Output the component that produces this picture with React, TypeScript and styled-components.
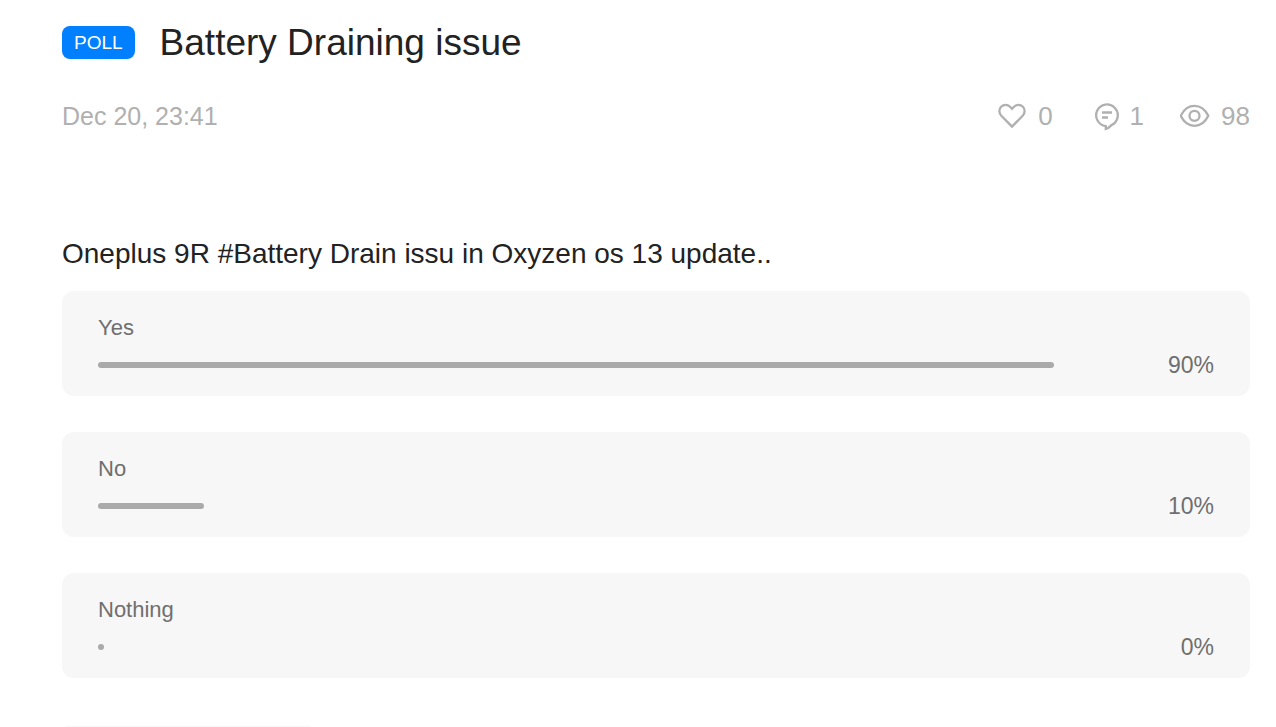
import React from "react";
import styled, { createGlobalStyle } from "styled-components";

const GlobalStyle = createGlobalStyle`
  * { box-sizing: border-box; }
  html, body { margin: 0; background: #fff; }
  body {
    font-family: "Liberation Sans", Arial, sans-serif;
    color: #222;
    overflow: hidden;
  }
`;

const Page = styled.main`
  display: flex;
  flex-direction: column;
  height: 100vh;
  padding: 20px 26px 0 62px;
  overflow: hidden;
`;

const Header = styled.header`
  display: flex;
  align-items: center;
  gap: 25px;
  height: 45px;
  flex: none;
`;

const Badge = styled.span`
  padding: 0 12px;
  border-radius: 8px;
  background: #007fff;
  color: #fff;
  font-size: 19px;
  line-height: 33px;
`;

const Title = styled.h1`
  margin: 0;
  font-size: 37px;
  line-height: 44px;
  font-weight: 400;
`;

const Meta = styled.div`
  display: flex;
  align-items: center;
  justify-content: space-between;
  flex: none;
  margin-top: 35px;
  color: #b0b0b0;
  font-size: 25px;
  line-height: 32px;
`;

const Stats = styled.div`
  display: flex;
  gap: 36px;
  font-size: 26px;
`;

const Stat = styled.span`
  display: flex;
  align-items: center;
  gap: 11px;

  svg {
    width: 30px;
    height: 30px;
    fill: none;
    stroke: currentColor;
    stroke-width: 2.3;
  }
`;

const Question = styled.h2`
  flex: none;
  margin: 104px 0 0;
  font-size: 28px;
  line-height: 36px;
  font-weight: 400;
`;

const Options = styled.ul`
  display: flex;
  flex-direction: column;
  flex: none;
  gap: 36px;
  margin: 19px 0 0;
  padding: 0;
  list-style: none;
`;

const Option = styled.li`
  padding: 22px 36px 16px;
  border-radius: 12px;
  background: #f7f7f7;
  color: #6f6f6f;
`;

const OptionName = styled.div`
  font-size: 22px;
  line-height: 29px;
`;

const ResultRow = styled.div`
  display: flex;
  align-items: center;
  margin-top: 8px;
`;

const Track = styled.div`
  flex: 1;
`;

const Fill = styled.div`
  min-width: 6px;
  height: 6px;
  border-radius: 3px;
  background: #aaa;
`;

const Percent = styled.span`
  width: 54px;
  text-align: right;
  font-size: 23px;
  line-height: 30px;
`;

const VoteButton = styled.button`
  flex: none;
  width: 253px;
  height: 60px;
  margin-top: 48px;
  border: 0;
  border-radius: 6px;
  background: #f7f7f7;
`;

const HeartIcon = () => (
  <svg viewBox="-1 0 30 30" aria-hidden="true">
    <path d="M14 25.600 3.300 14.700C.7 12 .8 8.100 3.100 5.700c2.500-2.500 6.500-2.500 8.900 0L14 7.800l2-2.100c2.400-2.500 6.400-2.500 8.900 0 2.300 2.400 2.400 6.300-.2 9Z" />
  </svg>
);

const CommentIcon = () => (
  <svg viewBox="0 0 30 30" aria-hidden="true">
    <path d="M16.800 25.030V28C18.900 27.300 20.900 25.800 22.500 24.100A10.800 10.800 0 1 0 16.800 25.030Z" />
    <path d="M13 11.500h10M13 16.500h6" />
  </svg>
);

const EyeIcon = () => (
  <svg viewBox="0 0 30 30" aria-hidden="true">
    <path d="M.7 14.800C3.600 8.800 8.800 4.800 14.500 4.800S25.400 8.800 28.300 14.800C25.400 20.800 20.200 24.800 14.500 24.800S3.600 20.800.7 14.800Z" />
    <circle cx="14.500" cy="14.800" r="5" />
  </svg>
);

const options = [
  { name: "Yes", percent: 90 },
  { name: "No", percent: 10 },
  { name: "Nothing", percent: 0 },
];

export default function App() {
  return (
    <>
      <GlobalStyle />
      <Page>
        <Header>
          <Badge>POLL</Badge>
          <Title>Battery Draining issue</Title>
        </Header>
        <Meta>
          <time>Dec 20, 23:41</time>
          <Stats>
            <Stat><HeartIcon />0</Stat>
            <Stat><CommentIcon />1</Stat>
            <Stat><EyeIcon />98</Stat>
          </Stats>
        </Meta>
        <Question>Oneplus 9R #Battery Drain issu in Oxyzen os 13 update..</Question>
        <Options>
          {options.map(({ name, percent }) => (
            <Option key={name}>
              <OptionName>{name}</OptionName>
              <ResultRow>
                <Track><Fill style={{ width: `${percent}%` }} /></Track>
                <Percent>{percent}%</Percent>
              </ResultRow>
            </Option>
          ))}
        </Options>
        <VoteButton type="button" aria-label="Vote" />
      </Page>
    </>
  );
}
